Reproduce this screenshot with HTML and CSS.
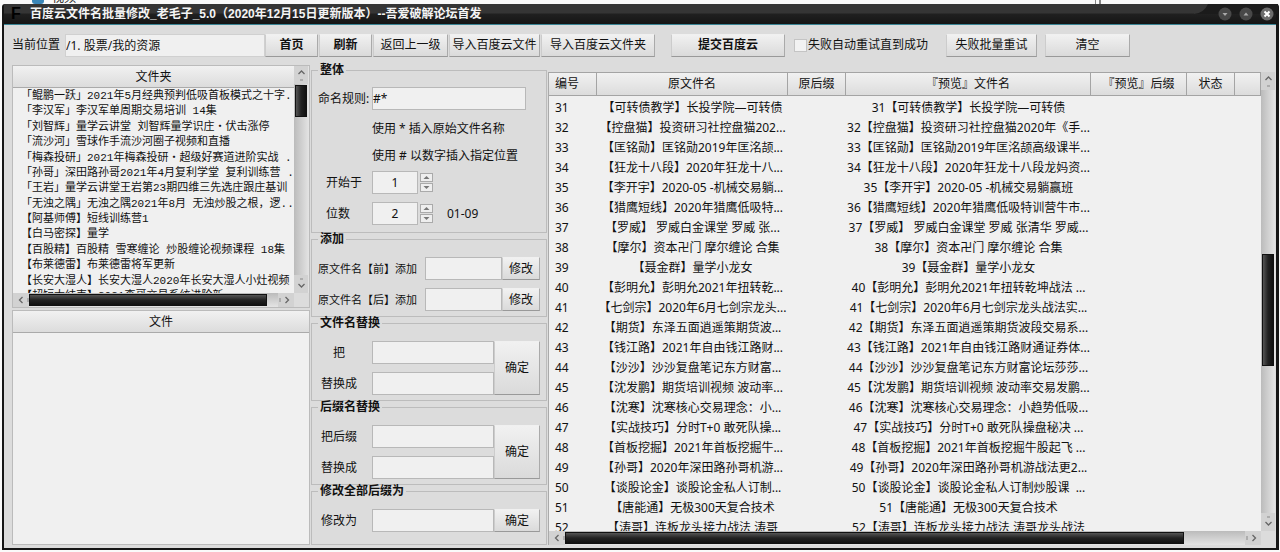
FILE: index.html
```html
<!DOCTYPE html>
<html lang="zh-CN">
<head>
<meta charset="utf-8">
<title>百度云文件名批量修改</title>
<link rel="stylesheet" href="styles.css">
</head>
<body>
<div class="desktop" aria-hidden="true"><span class="desk-icon"></span><span class="desk-text">视频</span><span class="desk-line"></span></div>
<div class="window">
  <header class="titlebar">
    <span class="logo">F</span>
    <h1 class="title">百度云文件名批量修改_老毛子_5.0（2020年12月15日更新版本）--吾爱破解论坛首发</h1>
    <svg class="gloss" viewBox="0 0 84 10" preserveAspectRatio="none" aria-hidden="true"><path d="M0 0H14Q10 9 0 10z" fill="#353535"/></svg>
    <div class="win-buttons">
      <button class="win-btn" aria-label="最小化"><svg viewBox="0 0 14 14"><circle cx="7" cy="7" r="6.500" fill="#484848"/><path d="M4.500 6h5L7 9z" fill="#aaa"/></svg></button>
      <button class="win-btn" aria-label="最大化"><svg viewBox="0 0 14 14"><circle cx="7" cy="7" r="6.500" fill="#484848"/><path d="M4.500 8.500h5L7 5.500z" fill="#aaa"/></svg></button>
      <button class="win-btn" aria-label="关闭"><svg viewBox="0 0 14 14"><circle cx="7" cy="7" r="6.500" fill="#6c6c6c"/><path d="M4.500 4.500l5 5M9.500 4.500l-5 5" stroke="#fff" stroke-width="2"/></svg></button>
    </div>
  </header>

  <div class="toolbar">
    <label class="path-label" for="path">当前位置</label>
    <input class="field path" id="path" value="/1. 股票/我的资源">
    <div class="nav-buttons">
      <button class="btn strong w52">首页</button>
      <button class="btn strong w52">刷新</button>
      <button class="btn w76">返回上一级</button>
      <button class="btn w92">导入百度云文件</button>
      <button class="btn w114">导入百度云文件夹</button>
    </div>
    <button class="btn strong w114">提交百度云</button>
    <label class="retry"><input type="checkbox" class="check">失败自动重试直到成功</label>
    <button class="btn w92 fail">失败批量重试</button>
    <button class="btn w84">清空</button>
  </div>

  <main class="main">
    <section class="files">
      <div class="folder-box">
        <div class="folder-pane">
          <h2 class="head">文件夹</h2>
          <ul class="folders">
            <li>「鲲鹏一跃」2021年5月经典预判低吸首板模式之十字.</li>
            <li>「李汉军」李汉军单周期交易培训 14集</li>
            <li>「刘智辉」量学云讲堂 刘智辉量学识庄・伏击涨停</li>
            <li>「流沙河」雪球作手流沙河圈子视频和直播</li>
            <li>「梅森投研」2021年梅森投研・超级好赛道进阶实战 .</li>
            <li>「孙哥」深田路孙哥2021年4月复利学堂 复利训练营 .</li>
            <li>「王岩」量学云讲堂王岩第23期四维三先选庄跟庄基训</li>
            <li>「无浊之隅」无浊之隅2021年8月 无浊炒股之根，逻..</li>
            <li>【阿基师傅】短线训练营1</li>
            <li>【白马密探】量学</li>
            <li>【百股精】百股精 雪寒缠论 炒股缠论视频课程 18集</li>
            <li>【布莱德雷】布莱德雷将军更新</li>
            <li>【长安大湿人】长安大湿人2020年长安大湿人小灶视频</li>
            <li>【超短大结束】2021李哥交易系统进阶新</li>
          </ul>
        </div>
        <div class="vbar"><svg class="arrow" viewBox="0 0 14 18"><path d="M4.500 8L7.500 5l3 3" fill="none" stroke="#666" stroke-width="1.300"/><path d="M6 14h3" stroke="#888"/></svg><span class="vthumb folder-thumb"></span><svg class="arrow end" viewBox="0 0 14 18"><path d="M4.500 9L7.500 12l3-3" fill="none" stroke="#666" stroke-width="1.300"/><path d="M6 4h3" stroke="#888"/></svg></div>
        <div class="hbar"><svg class="harrow" viewBox="0 0 16 14"><path d="M9.500 4L6.500 7l3 3" fill="none" stroke="#666" stroke-width="1.300"/><path d="M15 5v4" stroke="#888"/></svg><span class="hthumb"></span><svg class="harrow end" viewBox="0 0 16 14"><path d="M7.500 4L10.500 7l-3 3" fill="none" stroke="#666" stroke-width="1.300"/><path d="M2 5v4" stroke="#888"/></svg></div>
      </div>
      <div class="file-box"><h2 class="head">文件</h2></div>
    </section>

    <section class="rules">
      <fieldset class="group">
        <legend>整体</legend>
        <div class="row"><label class="rule-label" for="rule">命名规则:</label><input class="field rule" id="rule" value="#*"></div>
        <p class="hint hint-first">使用 * 插入原始文件名称</p>
        <p class="hint">使用 # 以数字插入指定位置</p>
        <div class="row spin-row"><label class="spin-label" for="start">开始于</label><input class="field num" id="start" value="1"><span class="spin"><button aria-label="增加"><svg viewBox="0 0 11 7"><path d="M2.500 5l3-3 3 3z" fill="#777"/></svg></button><button aria-label="减少"><svg viewBox="0 0 11 7"><path d="M2.500 2l3 3 3-3z" fill="#777"/></svg></button></span></div>
        <div class="row next"><label class="spin-label" for="digits">位数</label><input class="field num" id="digits" value="2"><span class="spin"><button aria-label="增加"><svg viewBox="0 0 11 7"><path d="M2.500 5l3-3 3 3z" fill="#777"/></svg></button><button aria-label="减少"><svg viewBox="0 0 11 7"><path d="M2.500 2l3 3 3-3z" fill="#777"/></svg></button></span><output class="range">01-09</output></div>
      </fieldset>
      <fieldset class="group">
        <legend>添加</legend>
        <div class="row"><label class="add-label" for="pre">原文件名【前】添加</label><input class="field grow" id="pre"><button class="btn w38">修改</button></div>
        <div class="row next"><label class="add-label" for="post">原文件名【后】添加</label><input class="field grow" id="post"><button class="btn w38">修改</button></div>
      </fieldset>
      <fieldset class="group">
        <legend>文件名替换</legend>
        <div class="swap"><label for="n1">把</label><input class="field" id="n1"><button class="btn tall">确定</button><label for="n2">替换成</label><input class="field" id="n2"></div>
      </fieldset>
      <fieldset class="group">
        <legend>后缀名替换</legend>
        <div class="swap"><label for="s1">把后缀</label><input class="field" id="s1"><button class="btn tall">确定</button><label for="s2">替换成</label><input class="field" id="s2"></div>
      </fieldset>
      <fieldset class="group last">
        <legend>修改全部后缀为</legend>
        <div class="swap"><label for="all">修改为</label><input class="field" id="all"><button class="btn">确定</button></div>
      </fieldset>
    </section>

    <section class="preview">
      <div class="table-pane">
        <table class="grid">
          <colgroup><col class="c-no"><col class="c-name"><col class="c-ext"><col><col class="c-newext"><col class="c-state"><col class="c-end"></colgroup>
          <thead><tr><th>编号</th><th>原文件名</th><th>原后缀</th><th>『预览』文件名</th><th>『预览』后缀</th><th>状态</th><th></th></tr></thead>
          <tbody>
            <tr><td>31</td><td>【可转债教学】长投学院—可转债</td><td></td><td>31【可转债教学】长投学院—可转债</td><td></td><td></td><td></td></tr>
            <tr><td>32</td><td>【控盘猫】投资研习社控盘猫202...</td><td></td><td>32【控盘猫】投资研习社控盘猫2020年《手...</td><td></td><td></td><td></td></tr>
            <tr><td>33</td><td>【匡铭勋】匡铭勋2019年匡洺颉...</td><td></td><td>33【匡铭勋】匡铭勋2019年匡洺颉高级课半...</td><td></td><td></td><td></td></tr>
            <tr><td>34</td><td>【狂龙十八段】2020年狂龙十八...</td><td></td><td>34【狂龙十八段】2020年狂龙十八段龙妈资...</td><td></td><td></td><td></td></tr>
            <tr><td>35</td><td>【李开宇】2020-05 -机械交易躺...</td><td></td><td>35【李开宇】2020-05 -机械交易躺赢班</td><td></td><td></td><td></td></tr>
            <tr><td>36</td><td>【猎鹰短线】2020年猎鹰低吸特...</td><td></td><td>36【猎鹰短线】2020年猎鹰低吸特训营牛市...</td><td></td><td></td><td></td></tr>
            <tr><td>37</td><td>【罗威】 罗威白金课堂 罗威 张...</td><td></td><td>37【罗威】 罗威白金课堂 罗威 张清华 罗威...</td><td></td><td></td><td></td></tr>
            <tr><td>38</td><td>【摩尔】资本卍门 摩尔缠论 合集</td><td></td><td>38【摩尔】资本卍门 摩尔缠论 合集</td><td></td><td></td><td></td></tr>
            <tr><td>39</td><td>【聂金群】量学小龙女</td><td></td><td>39【聂金群】量学小龙女</td><td></td><td></td><td></td></tr>
            <tr><td>40</td><td>【彭明允】彭明允2021年扭转乾...</td><td></td><td>40【彭明允】彭明允2021年扭转乾坤战法 ...</td><td></td><td></td><td></td></tr>
            <tr><td>41</td><td>【七剑宗】2020年6月七剑宗龙头...</td><td></td><td>41【七剑宗】2020年6月七剑宗龙头战法实...</td><td></td><td></td><td></td></tr>
            <tr><td>42</td><td>【期货】东泽五面逍遥策期货波...</td><td></td><td>42【期货】东泽五面逍遥策期货波段交易系...</td><td></td><td></td><td></td></tr>
            <tr><td>43</td><td>【钱江路】2021年自由钱江路财...</td><td></td><td>43【钱江路】2021年自由钱江路财通证券体...</td><td></td><td></td><td></td></tr>
            <tr><td>44</td><td>【沙沙】沙沙复盘笔记东方财富...</td><td></td><td>44【沙沙】沙沙复盘笔记东方财富论坛莎莎...</td><td></td><td></td><td></td></tr>
            <tr><td>45</td><td>【沈发鹏】期货培训视频 波动率...</td><td></td><td>45【沈发鹏】期货培训视频 波动率交易发鹏...</td><td></td><td></td><td></td></tr>
            <tr><td>46</td><td>【沈寒】沈寒核心交易理念：小...</td><td></td><td>46【沈寒】沈寒核心交易理念：小趋势低吸...</td><td></td><td></td><td></td></tr>
            <tr><td>47</td><td>【实战技巧】分时T+0 敢死队操...</td><td></td><td>47【实战技巧】分时T+0 敢死队操盘秘决 ...</td><td></td><td></td><td></td></tr>
            <tr><td>48</td><td>【首板挖掘】2021年首板挖掘牛...</td><td></td><td>48【首板挖掘】2021年首板挖掘牛股起飞 ...</td><td></td><td></td><td></td></tr>
            <tr><td>49</td><td>【孙哥】2020年深田路孙哥机游...</td><td></td><td>49【孙哥】2020年深田路孙哥机游战法更2...</td><td></td><td></td><td></td></tr>
            <tr><td>50</td><td>【谈股论金】谈股论金私人订制...</td><td></td><td>50【谈股论金】谈股论金私人订制炒股课&nbsp; ...</td><td></td><td></td><td></td></tr>
            <tr><td>51</td><td>【唐能通】无极300天复合技术</td><td></td><td>51【唐能通】无极300天复合技术</td><td></td><td></td><td></td></tr>
            <tr><td>52</td><td>【涛哥】连板龙头接力战法 涛哥</td><td></td><td>52【涛哥】连板龙头接力战法 涛哥龙头战法</td><td></td><td></td><td></td></tr>
          </tbody>
        </table>
      </div>
      <div class="vbar"><svg class="arrow" viewBox="0 0 14 18"><path d="M4.500 8L7.500 5l3 3" fill="none" stroke="#666" stroke-width="1.300"/><path d="M6 14h3" stroke="#888"/></svg><span class="vthumb table-thumb"></span><svg class="arrow end" viewBox="0 0 14 18"><path d="M4.500 9L7.500 12l3-3" fill="none" stroke="#666" stroke-width="1.300"/><path d="M6 4h3" stroke="#888"/></svg></div>
      <div class="hbar"><svg class="harrow" viewBox="0 0 16 14"><path d="M9.500 4L6.500 7l3 3" fill="none" stroke="#666" stroke-width="1.300"/><path d="M15 5v4" stroke="#888"/></svg><span class="hthumb wide"></span><svg class="harrow end" viewBox="0 0 16 14"><path d="M7.500 4L10.500 7l-3 3" fill="none" stroke="#666" stroke-width="1.300"/><path d="M2 5v4" stroke="#888"/></svg></div>
    </section>
  </main>
</div>
</body>
</html>
```
FILE: styles.css
```css
* { box-sizing: border-box; }

body {
  margin: 0;
  height: 100vh;
  padding: 0 1px 2px 2px;
  display: flex;
  flex-direction: column;
  overflow: hidden;
  background: #fafafa;
  color: #111;
  font: 12px/16px "Noto Sans", "Noto Sans CJK SC", sans-serif;
}

button, input { font: inherit; color: inherit; margin: 0; }
button { cursor: pointer; padding: 0; }
svg { display: block; }

/* strip of desktop above the window */
.desktop {
  display: flex;
  flex: none;
  align-items: flex-end;
  gap: 8px;
  height: 4px;
  padding-left: 30px;
  overflow: hidden;
}
.desk-icon { width: 12px; height: 4px; background: #3a86b8; border-radius: 0 0 3px 3px; }
.desk-text { line-height: 12px; }
.desk-line { width: 6px; height: 4px; margin-left: auto; margin-right: 178px; border: solid #888; border-width: 0 2px 0 1px; }

.window {
  flex: 1;
  min-height: 0;
  display: flex;
  flex-direction: column;
  background: #dcdcdc;
  border: solid #161616;
  border-width: 0 3px 2px 2px;
  border-radius: 3px 3px 0 0;
}

.titlebar {
  display: flex;
  flex: none;
  align-items: center;
  height: 21px;
  padding: 0 2px 0 7px;
  background: linear-gradient(#353535 0 9px, #202020 10px, #151515);
  border-bottom: 1px solid #3a8494;
}
.logo { width: 19px; font: bold 16px/20px "Liberation Sans", sans-serif; color: #000; }
.title {
  margin: 0;
  font: bold 12px/20px "Liberation Sans", "Noto Sans CJK SC", sans-serif;
  color: #f4f4f4;
  white-space: nowrap;
}
.gloss { align-self: flex-start; width: 84px; height: 10px; margin-left: auto; background: #1b1b1b; }
.win-buttons { display: flex; gap: 7px; margin-left: -60px; }
.win-btn { width: 14px; height: 14px; border: 0; background: none; }

.toolbar { display: flex; flex: none; align-items: center; height: 40px; padding: 0 8px; white-space: nowrap; }
.path-label { width: 53px; }
.field {
  min-width: 0;
  height: 23px;
  padding: 0 1px;
  background: #f0f0f0;
  border: 1px solid #b8b8b8;
  border-radius: 0;
}
.path { width: 200px; padding: 0; border-color: #d0d0d0; }
.btn {
  height: 23px;
  border: 1px solid;
  border-color: #f0f0f0 #aaa #999 #ccc;
  background: linear-gradient(#f1f1f1, #dadada);
  white-space: nowrap;
}
.strong { font-weight: 700; }
.w38 { width: 38px; }
.w52 { width: 53px; }
.w76 { width: 75px; }
.w84 { width: 85px; }
.w92 { width: 91px; }
.w114 { width: 114px; }
.nav-buttons { display: flex; gap: 1px; margin-right: 16px; }
.retry { display: flex; align-items: center; gap: 1px; margin-left: 9px; }
.check { appearance: none; width: 13px; height: 13px; margin: 0; background: #f2f2f2; border: 1px solid #c4c4c4; }
.fail { margin: 0 8px 0 18px; }

.main { flex: 1; min-height: 0; display: grid; grid-template-columns: 306px 238px 1fr; padding-bottom: 3px; }

/* folder and file lists */
.files { display: flex; flex-direction: column; gap: 2px; min-height: 0; padding-left: 8px; }
.folder-box {
  display: grid;
  grid-template: 227px 14px / 1fr 15px;
  border: 1px solid #bbb;
}
.folder-pane { min-width: 0; overflow: hidden; background: #f0f0f0; }
.head {
  margin: 0;
  height: 22px;
  font-size: 12px;
  line-height: 22px;
  font-weight: 400;
  text-align: center;
  background: linear-gradient(#f1f1f1, #dcdcdc);
  border-bottom: 1px solid #aaa;
}
.folders {
  display: flex;
  flex-direction: column;
  justify-content: space-between;
  height: 216px;
  margin: 0;
  padding: 1px 0 0 8px;
  list-style: none;
  font: 11px/15px "Liberation Mono", "Noto Sans CJK SC", monospace;
  white-space: nowrap;
}
.file-box { flex: 1; background: #f0f0f0; border: 1px solid #bbb; }

.vbar { display: flex; flex-direction: column; background: linear-gradient(90deg, #bbb, #e4e4e4); }
.arrow { width: 14px; height: 18px; flex: none; background: #d2d2d2; }
.end { margin-top: auto; }
.vthumb { width: 12px; margin-left: 1px; background: linear-gradient(90deg, #555, #222 50%, #111); border: 1px solid #111; }
.folder-thumb { height: 32px; margin-top: 1px; }
.hbar { display: flex; align-items: center; background: linear-gradient(#bbb, #e4e4e4); }
.harrow { width: 16px; height: 14px; flex: none; background: #d2d2d2; }
.hbar .end { margin: 0 0 0 auto; }
.hthumb { width: 238px; height: 12px; background: linear-gradient(#555, #222 50%, #111); border: 1px solid #111; }

/* rename rules */
.rules { display: flex; flex-direction: column; padding: 0 1px 0 1px; margin-top: -1px; min-width: 0; }
.group { flex: none; min-width: 0; margin: 0; height: 84px; padding: 12px 6px 0; border: 1px solid #bcbcbc; }
.group:first-child { height: 169px; padding-top: 11px; }
.group.last { flex: 1; }
legend { height: 12px; margin-left: 0; padding: 0 2px; line-height: 12px; font-weight: 700; }
.row { display: flex; align-items: center; white-space: nowrap; }
.next { margin-top: 8px; }
.rule-label { width: 54px; }
.rule { width: 154px; padding: 0; }
.hint { margin: 0 0 0 54px; line-height: 27px; white-space: nowrap; }
.hint-first { margin-top: 5px; }
.spin-row { margin-top: 2px; }
.spin-label { width: 46px; margin-left: 8px; }
.num { width: 46px; text-align: center; }
.spin { display: flex; flex-direction: column; gap: 1px; margin-left: 2px; }
.spin button { width: 13px; height: 9px; border: 1px solid #aaa; background: #eee; }
.range { margin-left: 14px; }
.add-label { width: 107px; font-size: 11px; }
.grow { flex: 1; }
.swap { display: grid; grid-template-columns: 42px 1fr 46px; gap: 8px 0; align-items: center; }
.swap label { text-align: center; }
.swap .field { margin-left: 12px; }
.tall { grid-column: 3; grid-row: 1 / 3; height: 54px; }

/* preview table */
.preview {
  display: grid;
  grid-template: 1fr 14px / 1fr 14px;
  min-width: 0;
  min-height: 0;
  margin: 7px 1px 0 0;
  border-left: 1px solid #aaa;
}
.table-pane { min-width: 0; overflow: hidden; background: #f0f0f0; }
.grid { width: 100%; table-layout: fixed; border-collapse: separate; border-spacing: 0; white-space: nowrap; }
.c-no { width: 48px; }
.c-name { width: 191px; }
.c-ext { width: 58px; }
.c-newext { width: 96px; }
.c-state { width: 48px; }
.c-end { width: 26px; }
.grid th {
  height: 24px;
  padding: 0;
  font-weight: 400;
  background: linear-gradient(#f1f1f1, #dcdcdc);
  border: solid #a4a4a4;
  border-width: 1px 1px 1px 0;
}
.grid td { height: 20px; padding: 0; line-height: 20px; text-align: center; overflow: hidden; }
.grid tbody tr:first-child td { padding-top: 2px; }
.grid th:first-child, .grid td:first-child { text-align: left; padding-left: 6px; }
.table-thumb { height: 112px; margin-top: 164px; }
.wide { width: 87%; }
```
